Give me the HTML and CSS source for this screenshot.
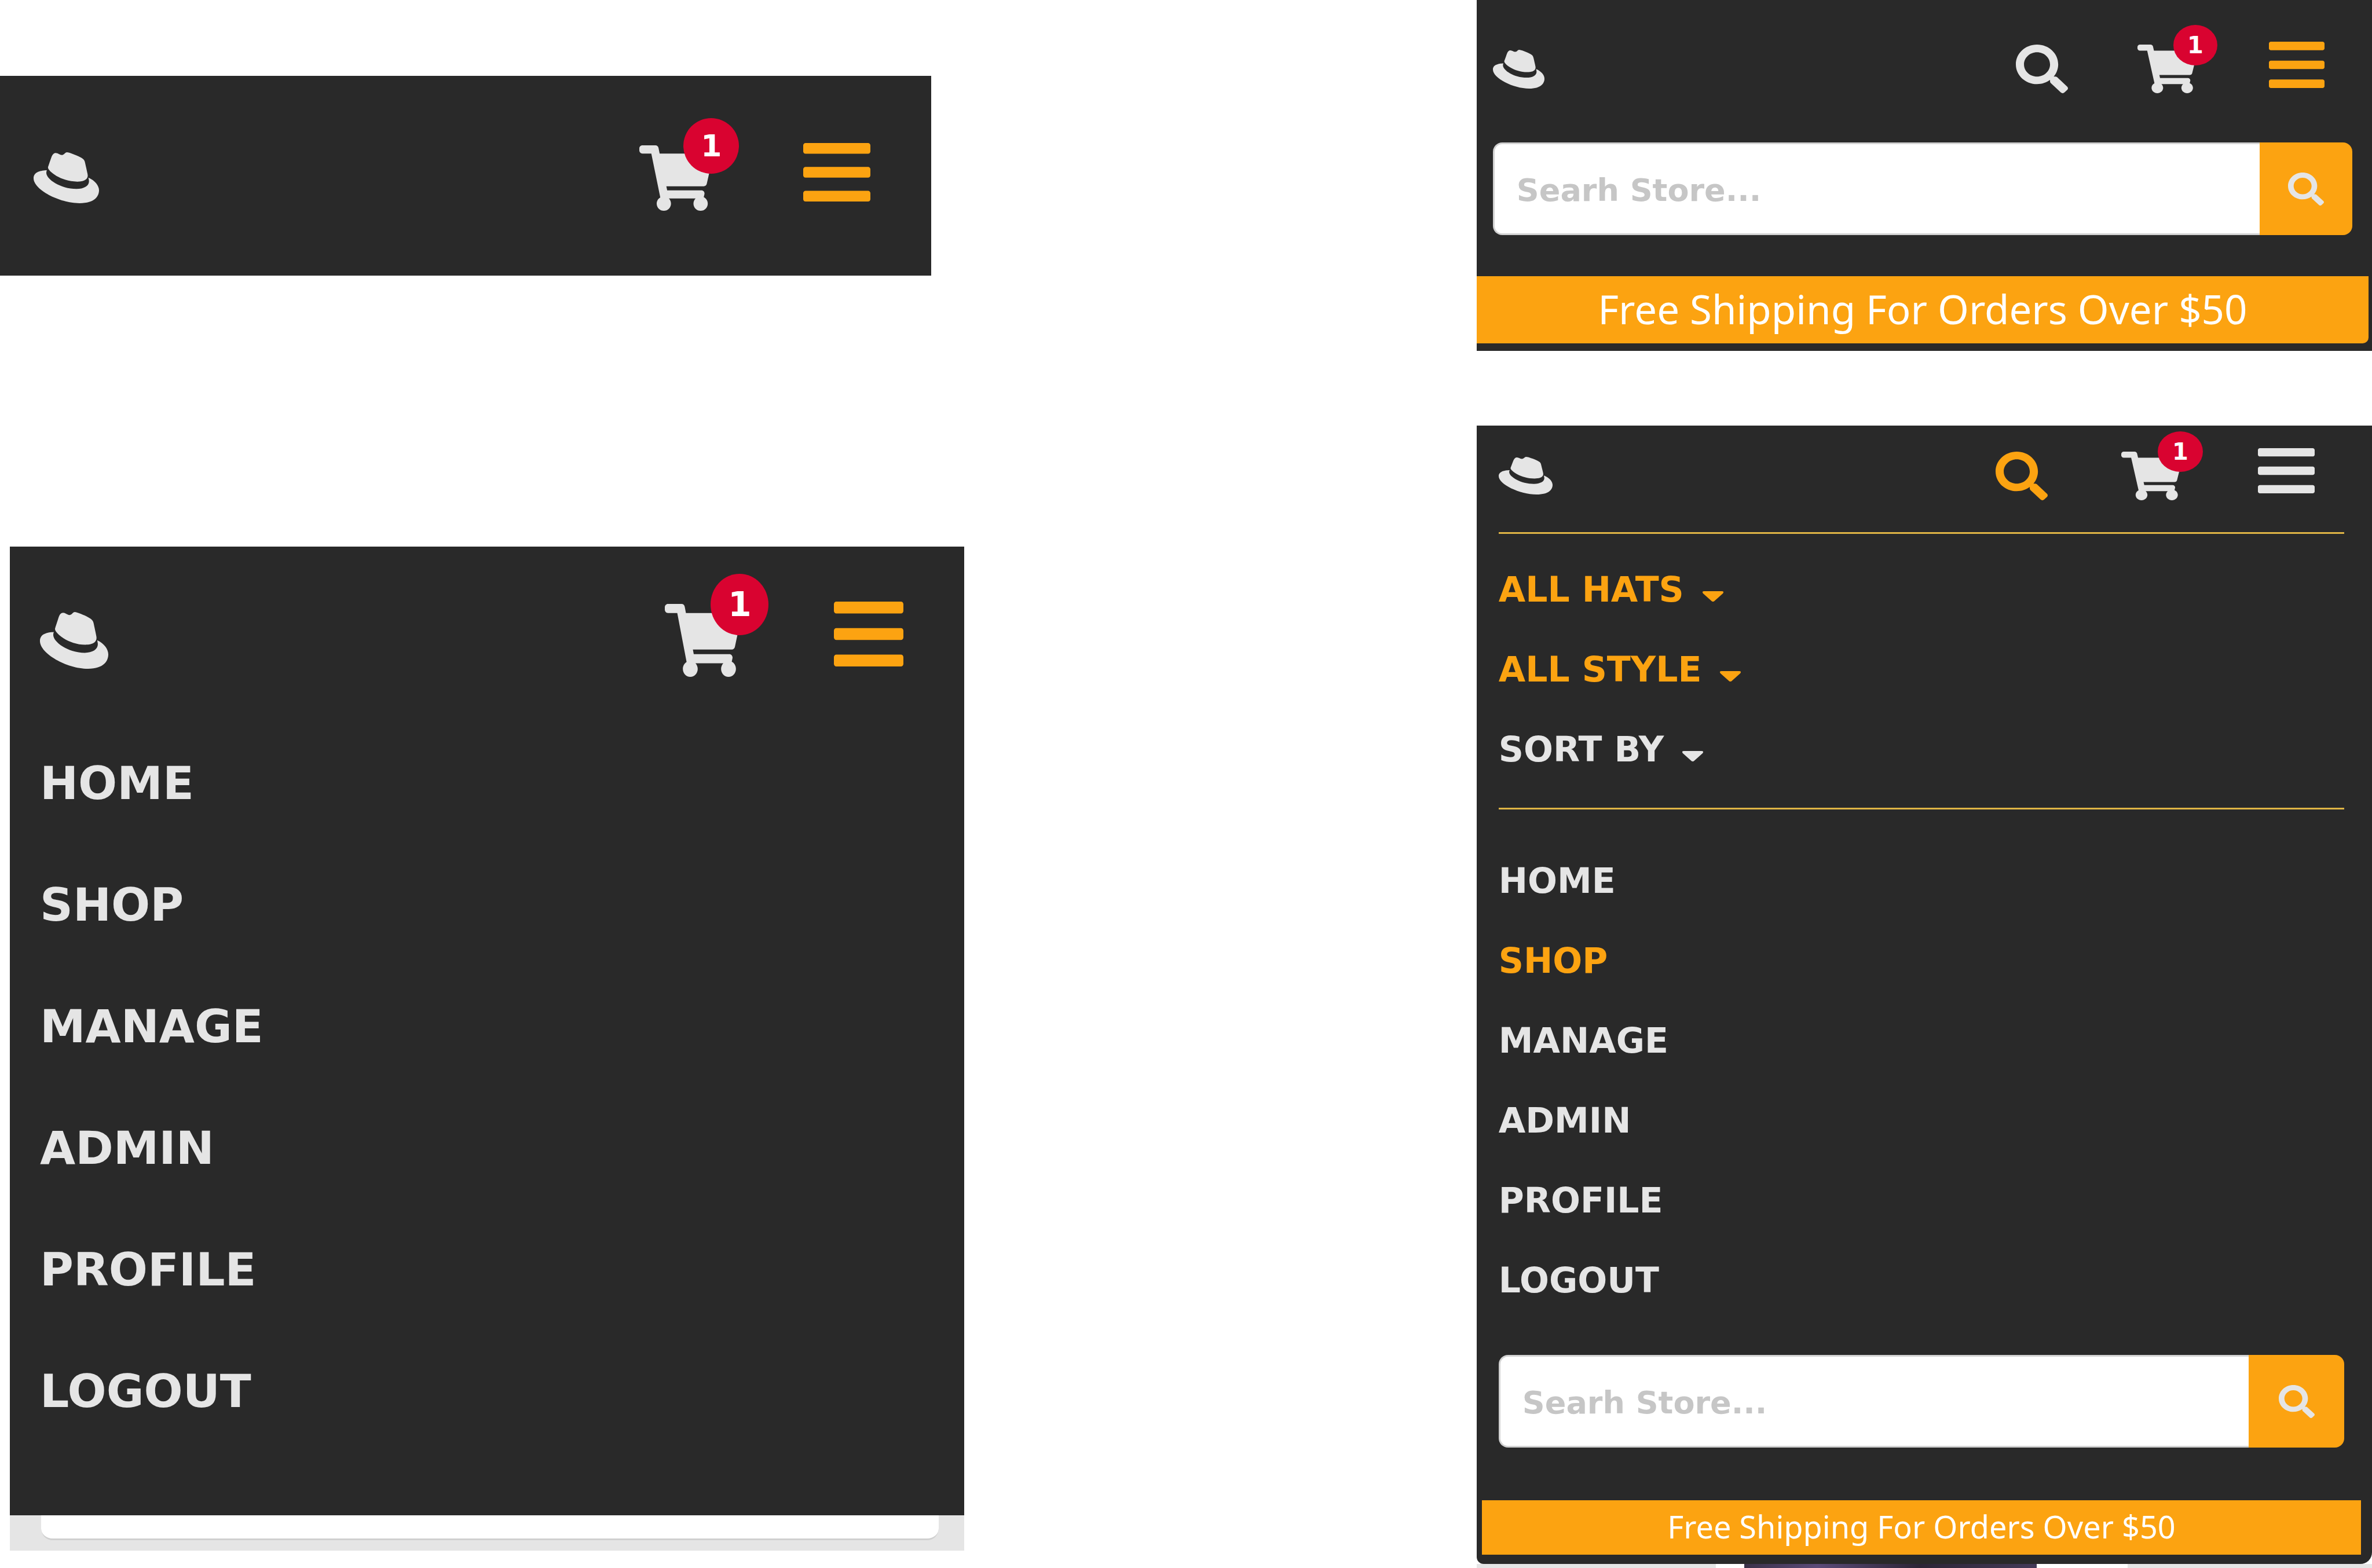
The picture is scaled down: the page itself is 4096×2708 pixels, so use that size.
FILE: index.html
```html
<!DOCTYPE html>
<html lang="en">
<head>
<meta charset="utf-8">
<meta name="viewport" content="width=device-width, initial-scale=1">
<title>Hat Store – mobile navigation</title>
<link rel="stylesheet" href="styles.css">
</head>
<body>
<svg class="sprite" aria-hidden="true">
  <symbol id="hat" viewBox="0 62 512 388" preserveAspectRatio="none"><path d="M341.52 285.56c33.65 0 82.34-6.94 82.34-47 .22-6.74.86-1.82-20.88-96.24-4.62-19.15-8.68-27.84-42.31-44.65-26.09-13.34-82.92-35.37-99.73-35.37-15.66 0-20.2 20.17-38.87 20.17-18 0-31.31-15.06-48.12-15.06-16.14 0-26.66 11-34.78 33.62-27.5 77.55-26.28 74.27-26.12 78.27 0 24.8 97.64 106.11 228.47 106.11M429 254.84c4.65 22 4.65 24.35 4.65 27.25 0 37.66-42.33 58.56-98 58.56-125.74.08-235.91-73.65-235.91-122.33a49.55 49.55 0 0 1 4.06-19.72C58.56 200.86 0 208.93 0 260.63c0 84.67 200.63 189 359.49 189 121.79 0 152.51-55.08 152.51-98.56 0-34.21-29.59-73.05-82.93-96.24"/></symbol>
  <symbol id="cart" viewBox="0 0 576 512" preserveAspectRatio="none"><path d="M528.12 301.319l47.273-208C578.806 78.301 567.391 64 551.99 64H159.208l-9.166-44.81C147.758 8.021 137.93 0 126.529 0H24C10.745 0 0 10.745 0 24v16c0 13.255 10.745 24 24 24h69.883l70.248 343.435C147.325 417.1 136 435.222 136 456c0 30.928 25.072 56 56 56s56-25.072 56-56c0-15.674-6.447-29.835-16.824-40h209.647C430.447 426.165 424 440.326 424 456c0 30.928 25.072 56 56 56s56-25.072 56-56c0-22.172-12.888-41.332-31.579-50.405l5.517-24.276c3.413-15.018-8.002-29.319-23.403-29.319H218.117l-6.545-32h293.145c11.206 0 20.92-7.754 23.403-18.681z"/></symbol>
  <symbol id="bars" viewBox="0 60 448 392" preserveAspectRatio="none"><path d="M16 132h416c8.837 0 16-7.163 16-16V76c0-8.837-7.163-16-16-16H16C7.163 60 0 67.163 0 76v40c0 8.837 7.163 16 16 16zm0 160h416c8.837 0 16-7.163 16-16v-40c0-8.837-7.163-16-16-16H16c-8.837 0-16 7.163-16 16v40c0 8.837 7.163 16 16 16zm0 160h416c8.837 0 16-7.163 16-16v-40c0-8.837-7.163-16-16-16H16c-8.837 0-16 7.163-16 16v40c0 8.837 7.163 16 16 16z"/></symbol>
  <symbol id="search" viewBox="0 0 512 512" preserveAspectRatio="none"><path d="M505 442.7L405.3 343c-4.5-4.5-10.6-7-17-7H372c27.6-35.3 44-79.7 44-128C416 93.1 322.9 0 208 0S0 93.1 0 208s93.1 208 208 208c48.3 0 92.7-16.4 128-44v16.3c0 6.4 2.5 12.5 7 17l99.7 99.7c9.4 9.4 24.6 9.4 33.9 0l28.3-28.3c9.4-9.4 9.4-24.6.1-34zM208 336c-70.7 0-128-57.2-128-128 0-70.7 57.2-128 128-128 70.7 0 128 57.2 128 128 0 70.7-57.2 128-128 128z"/></symbol>
  <symbol id="caret" viewBox="0 0 36 18" preserveAspectRatio="none"><path d="M3 0h30q5 0 2 4L21 16.500q-3 3-6 0L1 4q-3-4 2-4z"/></symbol>
</svg>

<main class="board">
  <div class="column column-start">
    <section class="panel panel-closed" aria-label="Menu closed">
      <header class="bar">
        <a class="brand" href="#" aria-label="Hat Store"><svg class="icon hat"><use href="#hat"/></svg></a>
        <a class="cart-link" href="#" aria-label="Cart, 1 item"><svg class="icon cart"><use href="#cart"/></svg><span class="badge">1</span></a>
        <button class="toggle active" type="button" aria-label="Menu"><svg class="icon bars"><use href="#bars"/></svg></button>
      </header>
    </section>

    <section class="panel-group">
      <div class="panel panel-open">
        <header class="bar">
          <a class="brand" href="#" aria-label="Hat Store"><svg class="icon hat"><use href="#hat"/></svg></a>
          <a class="cart-link" href="#" aria-label="Cart, 1 item"><svg class="icon cart"><use href="#cart"/></svg><span class="badge">1</span></a>
          <button class="toggle active" type="button" aria-label="Menu"><svg class="icon bars"><use href="#bars"/></svg></button>
        </header>
        <nav class="menu" aria-label="Main">
          <a href="#">HOME</a>
          <a href="#">SHOP</a>
          <a href="#">MANAGE</a>
          <a href="#">ADMIN</a>
          <a href="#">PROFILE</a>
          <a href="#">LOGOUT</a>
        </nav>
      </div>
      <div class="page-peek"><div class="card-peek"></div></div>
    </section>
  </div>

  <div class="column column-end">
    <section class="panel panel-search" aria-label="Search open">
      <header class="bar">
        <a class="brand" href="#" aria-label="Hat Store"><svg class="icon hat"><use href="#hat"/></svg></a>
        <button class="search-toggle" type="button" aria-label="Search"><svg class="icon lens"><use href="#search"/></svg></button>
        <a class="cart-link" href="#" aria-label="Cart, 1 item"><svg class="icon cart"><use href="#cart"/></svg><span class="badge">1</span></a>
        <button class="toggle active" type="button" aria-label="Menu"><svg class="icon bars"><use href="#bars"/></svg></button>
      </header>
      <form class="search-form">
        <input type="text" placeholder="Searh Store..." aria-label="Search store">
        <button type="submit" aria-label="Search"><svg class="icon lens-small"><use href="#search"/></svg></button>
      </form>
      <p class="banner">Free Shipping For Orders Over $50</p>
    </section>

    <section class="panel panel-full" aria-label="Menu and filters open">
      <header class="bar">
        <a class="brand" href="#" aria-label="Hat Store"><svg class="icon hat"><use href="#hat"/></svg></a>
        <button class="search-toggle active" type="button" aria-label="Search"><svg class="icon lens"><use href="#search"/></svg></button>
        <a class="cart-link" href="#" aria-label="Cart, 1 item"><svg class="icon cart"><use href="#cart"/></svg><span class="badge">1</span></a>
        <button class="toggle" type="button" aria-label="Menu"><svg class="icon bars"><use href="#bars"/></svg></button>
      </header>
      <div class="filters">
        <button class="active" type="button">ALL HATS<svg class="icon caret"><use href="#caret"/></svg></button>
        <button class="active" type="button">ALL STYLE<svg class="icon caret"><use href="#caret"/></svg></button>
        <button type="button">SORT BY<svg class="icon caret"><use href="#caret"/></svg></button>
      </div>
      <nav class="menu" aria-label="Main with filters">
        <a href="#">HOME</a>
        <a class="active" href="#" aria-current="page">SHOP</a>
        <a href="#">MANAGE</a>
        <a href="#">ADMIN</a>
        <a href="#">PROFILE</a>
        <a href="#">LOGOUT</a>
      </nav>
      <form class="search-form">
        <input type="text" placeholder="Searh Store..." aria-label="Search store">
        <button type="submit" aria-label="Search"><svg class="icon lens-small"><use href="#search"/></svg></button>
      </form>
      <p class="banner">Free Shipping For Orders Over $50</p>
    </section>
    <div class="product-peek"><span class="product-card"><span class="product-photo"></span></span></div>
  </div>
</main>
</body>
</html>
```

FILE: styles.css
```css
:root {
  --dark: #292929;
  --light: #e5e5e5;
  --orange: #fca311;
  --red: #d90330;
  --rule: #dfb445;
}

* { box-sizing: border-box; }

body {
  margin: 0;
  background: #fff;
  font-family: "DejaVu Sans", Verdana, sans-serif;
  font-weight: 700;
}

.sprite { position: absolute; width: 0; height: 0; }
.icon { display: block; fill: currentColor; }

a { color: inherit; text-decoration: none; }

button {
  margin: 0;
  padding: 0;
  border: 0;
  background: none;
  color: inherit;
  font: inherit;
  cursor: pointer;
}

.board {
  display: grid;
  grid-template-columns: 1665fr 1546fr;
  column-gap: 21.6%;
  align-items: start;
}

.column { display: flex; flex-direction: column; }
.column-start { padding-top: 131px; gap: 468px; }

.panel { background: var(--dark); color: var(--light); }
.active { color: var(--orange); }

/* Top bar */
.bar { display: flex; align-items: center; }
.brand { margin-right: auto; }
.hat { width: var(--hat-w); height: var(--hat-h); }
.cart { width: var(--cart-w); height: var(--cart-h); }
.bars { width: var(--bars-w); height: var(--bars-h); }
.lens { width: 90px; height: 84px; }
.lens-small { width: 62px; height: 57px; }

.cart-link { position: relative; margin-right: var(--cart-gap); }
.badge {
  position: absolute;
  left: 60%;
  top: -41%;
  display: flex;
  align-items: center;
  justify-content: center;
  width: var(--badge-w);
  height: var(--badge-h);
  border-radius: 50%;
  background: var(--red);
  color: #fff;
  font-size: var(--badge-text);
  line-height: 1;
}

/* Vertical menu */
.menu { display: flex; flex-direction: column; align-items: flex-start; }

/* Search box */
.search-form { display: flex; height: 160px; }
.search-form input {
  flex: 1;
  min-width: 0;
  padding: 4px 38px 0;
  border: 3px solid #d2d2d2;
  border-right: 0;
  border-radius: 16px 0 0 16px;
  background: #fff;
  color: #444;
  font: inherit;
  font-size: 54px;
}
.search-form input::placeholder { color: #c6c6c6; opacity: 1; }
.search-form button {
  display: flex;
  align-items: center;
  justify-content: center;
  width: 160px;
  border-radius: 0 16px 16px 0;
  background: var(--orange);
}

.banner {
  margin: 0;
  padding-bottom: 4px;
  background: var(--orange);
  color: #fff;
  font-family: "Noto Sans", sans-serif;
  font-weight: 400;
  text-align: center;
}

/* Closed menu */
.panel-closed {
  --hat-w: 113px; --hat-h: 88px;
  --cart-w: 127px; --cart-h: 113px; --cart-gap: 156px;
  --bars-w: 116px; --bars-h: 101px;
  --badge-w: 96px; --badge-h: 96px; --badge-text: 52px;
  margin-right: 57px;
  padding: 116px 105px 109px 58px;
}
.panel-closed .toggle { padding-bottom: 19px; }

/* Open menu */
.panel-group { margin-left: 17px; }
.panel-open {
  --hat-w: 118px; --hat-h: 98px;
  --cart-w: 132px; --cart-h: 126px; --cart-gap: 160px;
  --bars-w: 120px; --bars-h: 112px;
  --badge-w: 100px; --badge-h: 106px; --badge-text: 58px;
  padding: 95px 105px 109px 52px;
}
.panel-open .toggle { padding-bottom: 22px; }
.panel-open .menu { margin-top: 75px; font-size: 79px; line-height: 210px; }

.page-peek { padding: 0 44px 18px 54px; background: var(--light); }
.card-peek {
  height: 43px;
  border-bottom: 3px solid #d0d0d0;
  border-radius: 0 0 20px 20px;
  background: #fff;
}

/* Search open */
.panel-search {
  --hat-w: 89px; --hat-h: 67px;
  --cart-w: 103px; --cart-h: 84px; --cart-gap: 124px;
  --bars-w: 96px; --bars-h: 80px;
  --badge-w: 76px; --badge-h: 70px; --badge-text: 40px;
  padding: 72px 0 13px;
}
.panel-search .bar { padding: 0 82px 0 28px; }
.panel-search .toggle { padding-bottom: 14px; }
.panel-search .search-toggle { margin-right: 120px; }
.panel-search .search-form { margin: 80px 34px 71px 28px; }
.panel-search .banner {
  margin-right: 6px;
  border-radius: 0 0 10px 0;
  font-size: 69px;
  line-height: 112px;
}

/* Menu and filters open */
.panel-full {
  --hat-w: 93px; --hat-h: 65px;
  --cart-w: 105px; --cart-h: 84px; --cart-gap: 131px;
  --bars-w: 98px; --bars-h: 78px;
  --badge-w: 78px; --badge-h: 70px; --badge-text: 40px;
  margin-top: 129px;
  padding: 39px 0 16px;
  border-radius: 0 0 20px 12px;
}
.panel-full .bar { padding: 0 99px 0 38px; }
.panel-full .toggle { padding-bottom: 17px; }
.panel-full .search-toggle { margin-right: 127px; }

.filters {
  display: flex;
  flex-direction: column;
  align-items: flex-start;
  margin: 50px 48px 0 38px;
  padding: 27px 0 32px;
  border-top: 3px solid var(--rule);
  border-bottom: 3px solid var(--rule);
  font-size: 60px;
  line-height: 138px;
}
.filters button { display: flex; align-items: baseline; gap: 32px; }
.caret { width: 36px; height: 18px; }

.panel-full .menu { margin: 54px 38px 60px; font-size: 60px; line-height: 138px; }
.panel-full .search-form { margin: 0 48px 91px 38px; }
.panel-full .search-form button { width: 165px; }
.panel-full .banner { margin: 0 19px 0 9px; font-size: 54px; line-height: 90px; }

/* Top edge of the product list below the menu */
.product-peek { display: flex; justify-content: center; height: 7px; background: var(--light); }
.product-card { display: flex; justify-content: center; width: 46%; margin-right: 9px; background: #fff; }
.product-photo { width: 71%; margin-right: 107px; background: linear-gradient(90deg, #3a3148, #5a4a78 25%, #2c2536 60%, #443a58); }
```
